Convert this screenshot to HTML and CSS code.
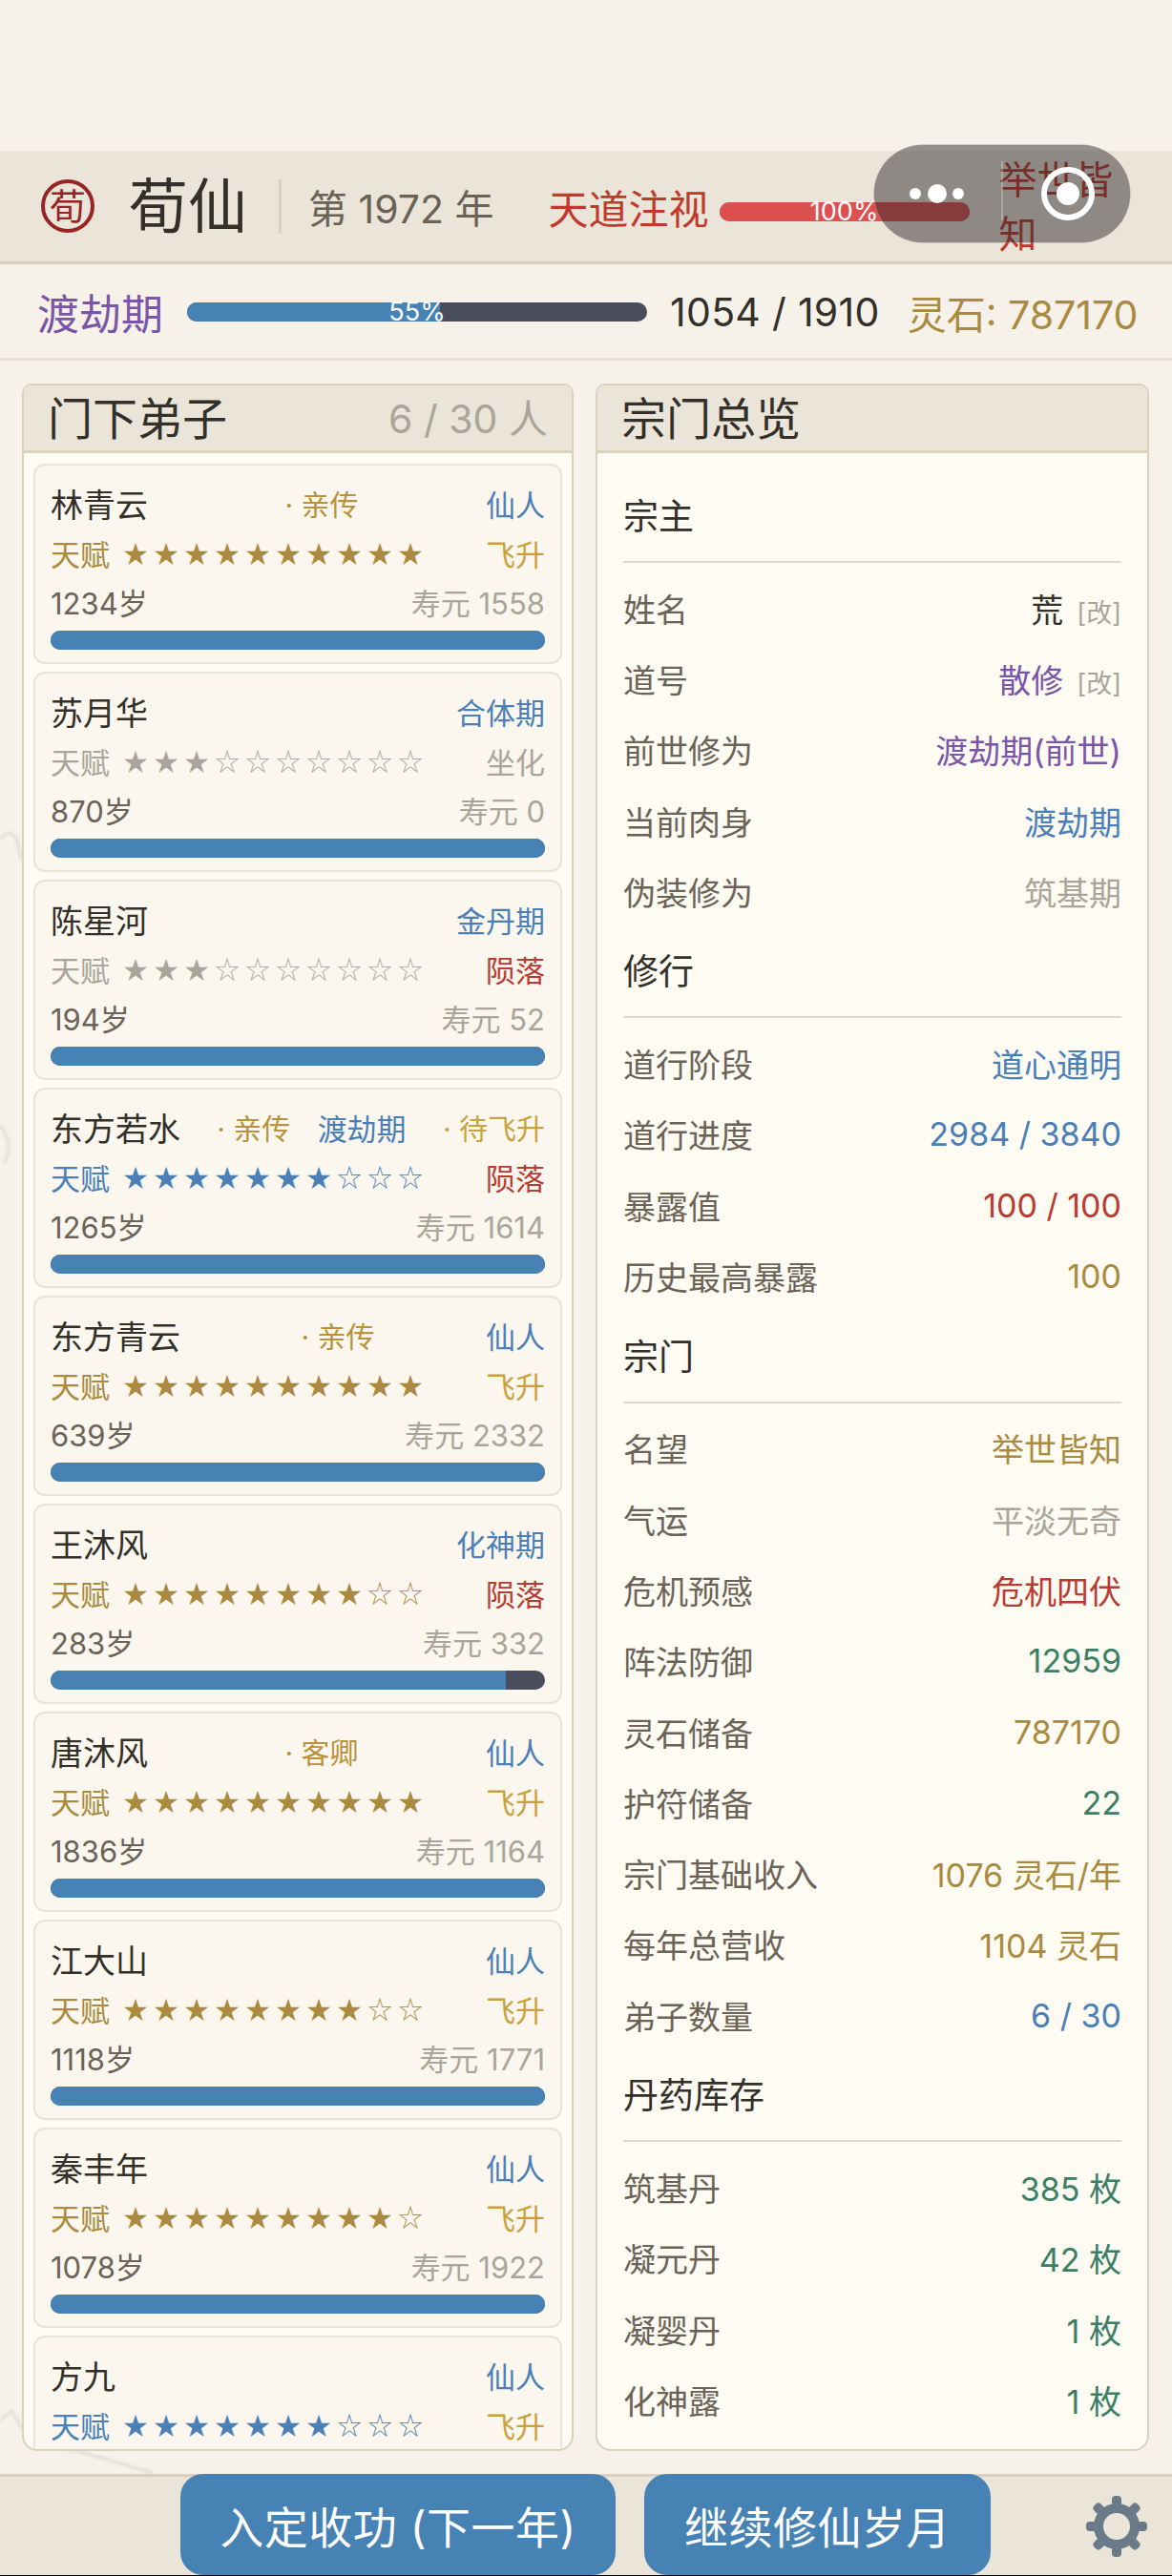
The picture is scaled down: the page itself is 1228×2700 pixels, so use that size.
FILE: index.html
```html
<!DOCTYPE html>
<html lang="zh-CN">
<head>
    <meta charset="UTF-8">
    <meta name="viewport" content="width=device-width, initial-scale=1.0">
    <title>荀仙</title>
    <link rel="stylesheet" href="styles.css">
</head>
<body>
    <!-- faint ink wash behind the panels -->
    <svg class="ink-wash" width="1228" height="2700" viewBox="0 0 1228 2700">
        <path d="M0 2537 L12 2527 L30 2555 L50 2562 L85 2570 L160 2592" />
        <path d="M0 880 Q16 860 22 900" />
        <path d="M0 1180 Q16 1200 4 1220" />
    </svg>

    <div class="status-space"></div>

    <header class="top-bar">
        <svg class="seal" width="58" height="58" viewBox="0 0 58 58">
            <circle cx="29" cy="29" r="26" />
            <text x="29" y="43" text-anchor="middle">荀</text>
        </svg>
        <h1 class="sect-name">荀仙</h1>
        <span class="top-divider"></span>
        <span class="year">第 1972 年</span>
        <span class="heaven-label">天道注视</span>
        <div class="bar heaven-bar">
            <div class="bar-fill fill-red"></div>
            <span class="bar-text">100%</span>
        </div>
        <span class="fame">举世皆知</span>
    </header>

    <div class="realm-bar">
        <span class="realm-name">渡劫期</span>
        <div class="bar xp-bar">
            <div class="bar-fill" style="width: 55%"></div>
            <span class="bar-text">55%</span>
        </div>
        <span class="xp-count">1054 / 1910</span>
        <span class="stones">灵石: 787170</span>
    </div>

    <main class="main">
        <section class="panel">
            <div class="panel-head">
                <h2>门下弟子</h2>
                <span class="panel-count">6 / 30 人</span>
            </div>
            <div class="disciple-list">
                <div class="card">
                    <div class="card-row row-name">
                        <span class="name">林青云</span>
                        <span class="tag">· 亲传</span>
                        <span class="c-blue">仙人</span>
                    </div>
                    <div class="card-row row-talent">
                        <span class="talent c-gold">天赋 <span class="stars">★★★★★★★★★★</span></span>
                        <span class="c-ascend">飞升</span>
                    </div>
                    <div class="card-row row-age">
                        <span class="age">1234岁</span>
                        <span class="life">寿元 1558</span>
                    </div>
                    <div class="bar life-bar"><div class="bar-fill"></div></div>
                </div>

                <div class="card">
                    <div class="card-row row-name">
                        <span class="name">苏月华</span>
                        <span class="c-blue">合体期</span>
                    </div>
                    <div class="card-row row-talent">
                        <span class="talent c-gray">天赋 <span class="stars">★★★<span class="hollow">☆☆☆☆☆☆☆</span></span></span>
                        <span class="c-gray">坐化</span>
                    </div>
                    <div class="card-row row-age">
                        <span class="age">870岁</span>
                        <span class="life">寿元 0</span>
                    </div>
                    <div class="bar life-bar"><div class="bar-fill"></div></div>
                </div>

                <div class="card">
                    <div class="card-row row-name">
                        <span class="name">陈星河</span>
                        <span class="c-blue">金丹期</span>
                    </div>
                    <div class="card-row row-talent">
                        <span class="talent c-gray">天赋 <span class="stars">★★★<span class="hollow">☆☆☆☆☆☆☆</span></span></span>
                        <span class="c-red">陨落</span>
                    </div>
                    <div class="card-row row-age">
                        <span class="age">194岁</span>
                        <span class="life">寿元 52</span>
                    </div>
                    <div class="bar life-bar"><div class="bar-fill"></div></div>
                </div>

                <div class="card">
                    <div class="card-row row-name">
                        <span class="name">东方若水</span>
                        <span class="tag">· 亲传</span>
                        <span class="c-blue">渡劫期</span>
                        <span class="tag tag-light">· 待飞升</span>
                    </div>
                    <div class="card-row row-talent">
                        <span class="talent c-blue">天赋 <span class="stars">★★★★★★★<span class="hollow">☆☆☆</span></span></span>
                        <span class="c-red">陨落</span>
                    </div>
                    <div class="card-row row-age">
                        <span class="age">1265岁</span>
                        <span class="life">寿元 1614</span>
                    </div>
                    <div class="bar life-bar"><div class="bar-fill"></div></div>
                </div>

                <div class="card">
                    <div class="card-row row-name">
                        <span class="name">东方青云</span>
                        <span class="tag">· 亲传</span>
                        <span class="c-blue">仙人</span>
                    </div>
                    <div class="card-row row-talent">
                        <span class="talent c-gold">天赋 <span class="stars">★★★★★★★★★★</span></span>
                        <span class="c-ascend">飞升</span>
                    </div>
                    <div class="card-row row-age">
                        <span class="age">639岁</span>
                        <span class="life">寿元 2332</span>
                    </div>
                    <div class="bar life-bar"><div class="bar-fill"></div></div>
                </div>

                <div class="card">
                    <div class="card-row row-name">
                        <span class="name">王沐风</span>
                        <span class="c-blue">化神期</span>
                    </div>
                    <div class="card-row row-talent">
                        <span class="talent c-gold">天赋 <span class="stars">★★★★★★★★<span class="hollow">☆☆</span></span></span>
                        <span class="c-red">陨落</span>
                    </div>
                    <div class="card-row row-age">
                        <span class="age">283岁</span>
                        <span class="life">寿元 332</span>
                    </div>
                    <div class="bar life-bar"><div class="bar-fill" style="width: 92%"></div></div>
                </div>

                <div class="card">
                    <div class="card-row row-name">
                        <span class="name">唐沐风</span>
                        <span class="tag">· 客卿</span>
                        <span class="c-blue">仙人</span>
                    </div>
                    <div class="card-row row-talent">
                        <span class="talent c-gold">天赋 <span class="stars">★★★★★★★★★★</span></span>
                        <span class="c-ascend">飞升</span>
                    </div>
                    <div class="card-row row-age">
                        <span class="age">1836岁</span>
                        <span class="life">寿元 1164</span>
                    </div>
                    <div class="bar life-bar"><div class="bar-fill"></div></div>
                </div>

                <div class="card">
                    <div class="card-row row-name">
                        <span class="name">江大山</span>
                        <span class="c-blue">仙人</span>
                    </div>
                    <div class="card-row row-talent">
                        <span class="talent c-gold">天赋 <span class="stars">★★★★★★★★<span class="hollow">☆☆</span></span></span>
                        <span class="c-ascend">飞升</span>
                    </div>
                    <div class="card-row row-age">
                        <span class="age">1118岁</span>
                        <span class="life">寿元 1771</span>
                    </div>
                    <div class="bar life-bar"><div class="bar-fill"></div></div>
                </div>

                <div class="card">
                    <div class="card-row row-name">
                        <span class="name">秦丰年</span>
                        <span class="c-blue">仙人</span>
                    </div>
                    <div class="card-row row-talent">
                        <span class="talent c-gold">天赋 <span class="stars">★★★★★★★★★<span class="hollow">☆</span></span></span>
                        <span class="c-ascend">飞升</span>
                    </div>
                    <div class="card-row row-age">
                        <span class="age">1078岁</span>
                        <span class="life">寿元 1922</span>
                    </div>
                    <div class="bar life-bar"><div class="bar-fill"></div></div>
                </div>

                <div class="card">
                    <div class="card-row row-name">
                        <span class="name">方九</span>
                        <span class="c-blue">仙人</span>
                    </div>
                    <div class="card-row row-talent">
                        <span class="talent c-blue">天赋 <span class="stars">★★★★★★★<span class="hollow">☆☆☆</span></span></span>
                        <span class="c-ascend">飞升</span>
                    </div>
                </div>
            </div>
        </section>

        <section class="panel">
            <div class="panel-head">
                <h2>宗门总览</h2>
            </div>
            <div class="overview">
                <h3 class="section-title">宗主</h3>
                <div class="stat"><span>姓名</span><span class="c-dark">荒<em class="edit">[改]</em></span></div>
                <div class="stat"><span>道号</span><span class="c-purple">散修<em class="edit">[改]</em></span></div>
                <div class="stat"><span>前世修为</span><span class="c-purple">渡劫期(前世)</span></div>
                <div class="stat"><span>当前肉身</span><span class="c-blue">渡劫期</span></div>
                <div class="stat"><span>伪装修为</span><span class="c-gray">筑基期</span></div>

                <h3 class="section-title">修行</h3>
                <div class="stat"><span>道行阶段</span><span class="c-blue">道心通明</span></div>
                <div class="stat"><span>道行进度</span><span class="c-blue">2984 / 3840</span></div>
                <div class="stat"><span>暴露值</span><span class="c-red">100 / 100</span></div>
                <div class="stat"><span>历史最高暴露</span><span class="c-gold">100</span></div>

                <h3 class="section-title">宗门</h3>
                <div class="stat"><span>名望</span><span class="c-gold">举世皆知</span></div>
                <div class="stat"><span>气运</span><span class="c-gray">平淡无奇</span></div>
                <div class="stat"><span>危机预感</span><span class="c-red">危机四伏</span></div>
                <div class="stat"><span>阵法防御</span><span class="c-green">12959</span></div>
                <div class="stat"><span>灵石储备</span><span class="c-gold">787170</span></div>
                <div class="stat"><span>护符储备</span><span class="c-green">22</span></div>
                <div class="stat"><span>宗门基础收入</span><span class="c-gold">1076 灵石/年</span></div>
                <div class="stat"><span>每年总营收</span><span class="c-gold">1104 灵石</span></div>
                <div class="stat"><span>弟子数量</span><span class="c-blue">6 / 30</span></div>

                <h3 class="section-title">丹药库存</h3>
                <div class="stat"><span>筑基丹</span><span class="c-green">385 枚</span></div>
                <div class="stat"><span>凝元丹</span><span class="c-green">42 枚</span></div>
                <div class="stat"><span>凝婴丹</span><span class="c-green">1 枚</span></div>
                <div class="stat"><span>化神露</span><span class="c-green">1 枚</span></div>
            </div>
        </section>
    </main>

    <footer class="bottom-bar">
        <button type="button" class="btn btn-first">入定收功 (下一年)</button>
        <button type="button" class="btn btn-second">继续修仙岁月</button>
        <svg class="gear" width="64" height="64" viewBox="0 0 64 64">
            <g class="gear-teeth">
                <rect x="27" y="0" width="10" height="64" rx="4" />
                <rect x="27" y="0" width="10" height="64" rx="4" transform="rotate(45 32 32)" />
                <rect x="27" y="0" width="10" height="64" rx="4" transform="rotate(90 32 32)" />
                <rect x="27" y="0" width="10" height="64" rx="4" transform="rotate(135 32 32)" />
            </g>
            <circle class="gear-ring" cx="32" cy="32" r="19" />
        </svg>
    </footer>

    <!-- host app capsule, floats over the header -->
    <svg class="capsule" width="270" height="104" viewBox="0 0 270 104">
        <rect class="capsule-shape" x="0.5" y="0.5" width="269" height="103" rx="51.5" />
        <rect class="capsule-line" x="134" y="18" width="2" height="62" />
        <circle cx="44" cy="52" r="6" />
        <circle cx="67" cy="52" r="10" />
        <circle cx="89" cy="52" r="6" />
        <circle class="capsule-ring" cx="204" cy="52" r="25" />
        <circle cx="204" cy="52" r="12" />
    </svg>
</body>
</html>
```

FILE: styles.css
```css
:root {
    --blue: #4682b4;
    --blue-text: #4a7fb8;
    --bar-dark: #4a4e5c;
    --gold: #a98a3e;
    --gray: #aaa59a;
    --label: #6b6357;
    --dark: #33302a;
    --line: #d9d0c0;
    --head-bg: #ebe5d9;
}

* {
    box-sizing: border-box;
    margin: 0;
    padding: 0;
}

body {
    position: relative;
    width: 1228px;
    height: 2700px;
    overflow: hidden;
    display: flex;
    flex-direction: column;
    font-family: Inter, "Noto Sans CJK SC", sans-serif;
    color: var(--dark);
    background-color: #f6f2e9;
}

h1, h2, h3 {
    font-weight: 400;
}

.ink-wash {
    position: absolute;
    left: 0;
    top: 0;
    fill: none;
    stroke: #d8d3c6;
    stroke-width: 4;
    opacity: 0.5;
    filter: blur(1px);
}

.status-space {
    height: 158px;
    flex: none;
}

/* top bar */
.top-bar {
    position: relative;
    height: 119px;
    flex: none;
    display: flex;
    align-items: center;
    padding-left: 42px;
    background-color: var(--head-bg);
    border-bottom: 3px solid var(--line);
}

.seal circle {
    fill: none;
    stroke: #962626;
    stroke-width: 4;
}

.seal text {
    font-size: 38px;
    fill: #962626;
}

.sect-name {
    font-size: 62px;
    line-height: 1;
    margin-left: 35px;
    padding-top: 2px;
}

.top-divider {
    width: 3px;
    height: 57px;
    margin-left: 33px;
    background-color: var(--line);
}

.year {
    font-size: 41px;
    margin-left: 28px;
    color: #6a6255;
}

.heaven-label {
    font-size: 42px;
    margin-left: 57px;
    color: #c0392b;
}

.fame {
    width: 124px;
    margin-left: 31px;
    font-size: 40px;
    line-height: 57px;
    padding-top: 2px;
    color: #c0392b;
}

/* bars */
.bar {
    position: relative;
    height: 20px;
    border-radius: 10px;
    background-color: var(--bar-dark);
}

.bar-fill {
    width: 100%;
    height: 100%;
    border-radius: 10px;
    background-color: var(--blue);
}

.bar-fill[style] {
    border-radius: 10px 0 0 10px;
}

.fill-red {
    background-color: #dc5050;
}

.bar-text {
    position: absolute;
    left: 0;
    right: 0;
    top: -4px;
    text-align: center;
    font-size: 27px;
    line-height: 28px;
    color: #fff;
}

.heaven-bar {
    width: 262px;
    margin-left: 11px;
    top: 6px;
    background-color: #dc5050;
}

.realm-bar {
    height: 101px;
    flex: none;
    display: flex;
    align-items: center;
    padding-left: 39px;
    padding-top: 2px;
    border-bottom: 3px solid #e9e3d7;
}

.realm-name {
    font-size: 44px;
    color: #7a55a8;
}

.xp-bar {
    width: 482px;
    margin-left: 25px;
}

.xp-count {
    font-size: 41px;
    letter-spacing: 0.3px;
    margin-left: 24px;
}

.stones {
    font-size: 41px;
    margin-left: 29px;
    color: var(--gold);
}

/* panels */
.main {
    position: relative;
    flex: 1;
    min-height: 0;
    display: grid;
    grid-template-columns: 578px 580px;
    gap: 23px;
    padding: 24px 24px 24px 23px;
}

.panel {
    min-height: 0;
    display: flex;
    flex-direction: column;
    overflow: hidden;
    border: 2px solid var(--line);
    border-radius: 10px 10px 16px 16px;
    background-color: #fefbf3;
}

.panel-head {
    height: 71px;
    flex: none;
    display: flex;
    align-items: center;
    justify-content: space-between;
    padding: 0 25px 5px 25px;
    background-color: #ebe4d8;
    border-bottom: 3px solid var(--line);
}

.panel-head h2 {
    font-size: 47px;
}

.panel-count {
    font-size: 41px;
    color: var(--gray);
}

.disciple-list {
    flex: 1;
    min-height: 0;
    overflow: hidden;
    display: flex;
    flex-direction: column;
    gap: 8px;
    padding: 11px 10px 0;
}

/* disciple card */
.card {
    height: 210px;
    flex: none;
    padding: 15px 16px 0;
    background-color: #fbf7ee;
    border: 2px solid #e9e3d6;
    border-radius: 12px;
}

.card-row {
    display: flex;
    align-items: center;
    justify-content: space-between;
    font-size: 31px;
}

.row-name {
    height: 48px;
}

.row-talent {
    height: 56px;
}

.row-age {
    height: 46px;
}

.name {
    font-size: 34px;
}

.tag {
    padding-left: 10px;
    font-size: 30px;
    color: #b8923c;
}

.tag-light {
    color: #c9a23d;
}

.talent {
    display: flex;
    align-items: center;
    gap: 14px;
}

.stars {
    font-family: "Noto Sans CJK SC", sans-serif;
    font-size: 26px;
    letter-spacing: 6px;
    line-height: 1;
}

.hollow {
    font-weight: 300;
}

.age {
    font-size: 31px;
    color: var(--label);
}

.life {
    font-size: 31px;
    color: var(--gray);
}

.life-bar {
    margin-top: 8px;
}

/* overview */
.overview {
    flex: 1;
    padding: 19px 27px 0;
    overflow: hidden;
}

.section-title {
    height: 78px;
    margin-top: 18px;
    margin-bottom: 10px;
    line-height: 60px;
    font-size: 37px;
    border-bottom: 2px solid #dfd7c8;
}

.stat {
    height: 74.3px;
    display: flex;
    align-items: center;
    justify-content: space-between;
    font-size: 34px;
    color: var(--label);
}

.edit {
    margin-left: 14px;
    font-size: 27px;
    font-style: normal;
    color: var(--gray);
}

/* text colours */
.c-blue { color: var(--blue-text); }
.c-gold { color: var(--gold); }
.c-gray { color: var(--gray); }
.c-red { color: #b93a32; }
.c-green { color: #3a8064; }
.c-purple { color: #7a55a8; }
.c-dark { color: var(--dark); }
.c-ascend { color: #c9a23d; }

/* bottom bar */
.bottom-bar {
    height: 107px;
    flex: none;
    display: flex;
    padding-left: 189px;
    background-color: var(--head-bg);
    border-top: 3px solid var(--line);
    border-bottom: 1px solid #000;
}

.btn {
    margin-top: -3px;
    border: none;
    border-radius: 24px;
    font-family: inherit;
    font-size: 46px;
    letter-spacing: 0.5px;
    color: #fff;
    background-color: var(--blue);
}

.btn-first {
    width: 456px;
}

.btn-second {
    width: 363px;
    margin-left: 30px;
}

.gear {
    align-self: center;
    margin-left: 100px;
}

.gear-teeth {
    fill: #6b7a88;
}

.gear-ring {
    fill: var(--head-bg);
    stroke: #6b7a88;
    stroke-width: 10;
}

/* capsule */
.capsule {
    position: absolute;
    left: 915px;
    top: 151px;
    fill: #fff;
}

.capsule-shape {
    fill: rgba(40, 38, 39, 0.48);
    stroke: rgba(255, 255, 255, 0.2);
}

.capsule-line {
    fill: rgba(255, 255, 255, 0.25);
}

.capsule-ring {
    fill: none;
    stroke: #fff;
    stroke-width: 6;
}
```
